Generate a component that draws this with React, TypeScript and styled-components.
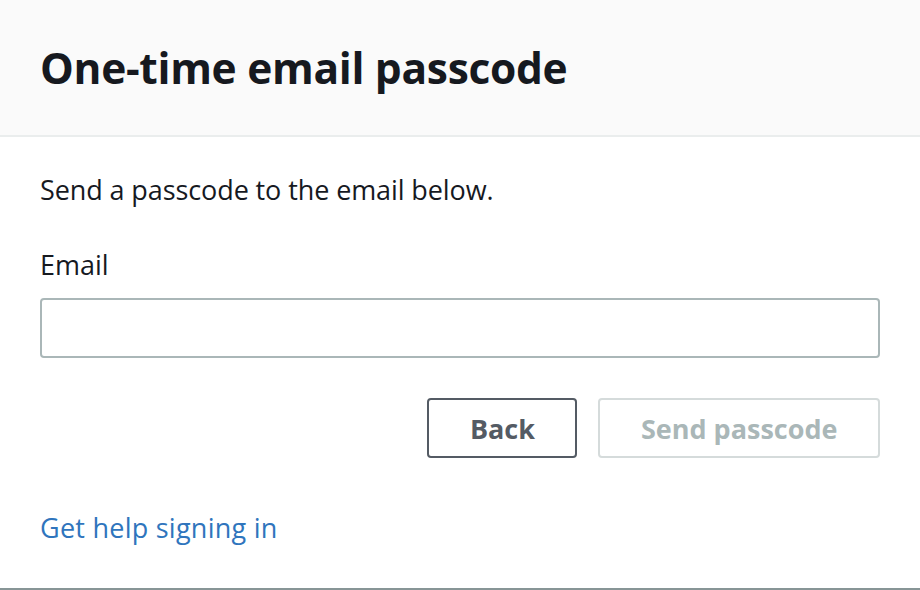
import React from "react";
import styled, { createGlobalStyle } from "styled-components";

const Global = createGlobalStyle`
  html, body { margin: 0; padding: 0; background: #ffffff; }
  body { font-family: "Open Sans", "Noto Sans", sans-serif; color: #16191f; }
  * { box-sizing: border-box; }
`;

const Panel = styled.div`
  width: 920px;
  height: 590px;
  display: flex;
  flex-direction: column;
  border-bottom: 2px solid #879596;
  overflow: hidden;
`;

const Header = styled.header`
  height: 137px;
  background: #fafafa;
  border-bottom: 2px solid #eaeded;
  display: flex;
  align-items: center;
  padding: 0 40px;
`;

const Title = styled.h1`
  margin: 0;
  font-size: 42.5px;
  font-weight: 700;
  letter-spacing: -0.3px;
  color: #16191f;
`;

const Body = styled.div`
  display: flex;
  flex-direction: column;
  padding: 0 40px;
`;

const Intro = styled.p`
  margin: 37px 0 0;
  font-size: 27px;
  line-height: 32px;
  letter-spacing: -0.1px;
`;

const Label = styled.label`
  margin-top: 43px;
  font-size: 27px;
  line-height: 32px;
`;

const Input = styled.input`
  margin-top: 17px;
  height: 60px;
  width: 100%;
  border: 2px solid #aab7b8;
  border-radius: 4px;
  font: inherit;
  font-size: 27px;
  padding: 0 16px;
  outline: none;
`;

const Actions = styled.div`
  display: flex;
  justify-content: flex-end;
  gap: 21px;
  margin-top: 40px;
`;

const Button = styled.button<{ $disabled?: boolean }>`
  height: 60px;
  padding: 0 40.5px;
  border-radius: 4px;
  background: #ffffff;
  font-family: inherit;
  font-size: 27px;
  font-weight: 700;
  border: 2px solid ${(p) => (p.$disabled ? "#d5dbdb" : "#545b64")};
  color: ${(p) => (p.$disabled ? "#aab7b8" : "#545b64")};
`;

const HelpLink = styled.a`
  margin-top: 54px;
  font-size: 27px;
  line-height: 32px;
  color: #2f75bd;
  text-decoration: none;
  align-self: flex-start;
  letter-spacing: 0.25px;
`;

export default function App() {
  return (
    <>
      <Global />
      <Panel>
        <Header>
          <Title>One-time email passcode</Title>
        </Header>
        <Body>
          <Intro>Send a passcode to the email below.</Intro>
          <Label htmlFor="email">Email</Label>
          <Input id="email" type="email" />
          <Actions>
            <Button>Back</Button>
            <Button $disabled disabled>
              Send passcode
            </Button>
          </Actions>
          <HelpLink href="#">Get help signing in</HelpLink>
        </Body>
      </Panel>
    </>
  );
}
